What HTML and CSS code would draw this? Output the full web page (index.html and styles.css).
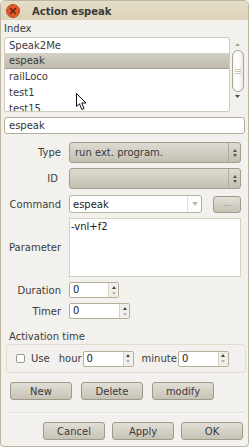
FILE: index.html
```html
<!DOCTYPE html>
<html>
<head>
<meta charset="utf-8">
<link rel="stylesheet" href="styles.css">
</head>
<body>
<div class="window">
  <div class="titlebar">
    <span class="close"><svg width="14" height="14" viewBox="0 0 14 14"><circle cx="7" cy="7" r="6.5" fill="#e3572a" stroke="#b94a22" stroke-width="1"/><path d="M4.6 4.6 L9.4 9.4 M9.4 4.6 L4.6 9.4" stroke="#6b2a12" stroke-width="1.6" stroke-linecap="round"/></svg></span>
    <span class="title">Action espeak</span>
  </div>
  <div class="content">
    <div class="index-label">Index</div>
    <div class="listwrap">
      <div class="list">
        <div class="item">Speak2Me</div>
        <div class="item sel">espeak</div>
        <div class="item">railLoco</div>
        <div class="item">test1</div>
        <div class="item">test15</div>
      </div>
      <div class="vscroll">
        <svg class="arr" width="7" height="5" viewBox="0 0 7 5"><path d="M3.5 1 L6 4 L1 4 Z" fill="#a8a496"/></svg>
        <div class="thumb"><span class="grip"></span><span class="grip"></span><span class="grip"></span></div>
        <svg class="arr" width="7" height="5" viewBox="0 0 7 5"><path d="M1 1 L6 1 L3.5 4 Z" fill="#4a4a4a"/></svg>
      </div>
      <svg class="cursor" width="12" height="18" viewBox="0 0 12 18"><path d="M0.5 0.5 L0.5 13.5 L3.5 10.8 L5.8 16.5 L8 15.5 L5.8 10 L10 10 Z" fill="#fff" stroke="#111" stroke-width="1" stroke-linejoin="round"/></svg>
    </div>
    <div class="entry">espeak</div>

    <div class="form">
      <div class="lbl">Type</div>
      <div class="combo"><span class="ctext">run ext. program.</span><span class="carrows"><i class="up"></i><i class="dn"></i></span></div>

      <div class="lbl lbl-id">ID</div>
      <div class="combo"><span class="ctext"></span><span class="carrows"><i class="up"></i><i class="dn"></i></span></div>

      <div class="lbl cmd-lbl">Command</div>
      <div class="cmdrow">
        <div class="cmdbox"><span class="ctext">espeak</span><span class="cdrop"><i class="dn light"></i></span></div>
        <div class="btn dots">...</div>
      </div>

      <div class="lbl">Parameter</div>
      <div class="textarea">-vnl+f2</div>

      <div class="lbl">Duration</div>
      <div class="spin w50"><span class="stext">0</span><span class="sarrows"><i class="up"></i><i class="dn light"></i></span></div>

      <div class="lbl">Timer</div>
      <div class="spin w61"><span class="stext">0</span><span class="sarrows"><i class="up"></i><i class="dn light"></i></span></div>
    </div>

    <div class="group-label">Activation time</div>
    <div class="frame">
      <span class="check"></span>
      <span class="use">Use</span>
      <span class="hour">hour</span>
      <div class="spin w51"><span class="stext">0</span><span class="sarrows"><i class="up"></i><i class="dn light"></i></span></div>
      <span class="minute">minute</span>
      <div class="spin w51"><span class="stext">0</span><span class="sarrows"><i class="up"></i><i class="dn light"></i></span></div>
    </div>

    <div class="btnrow">
      <div class="btn">New</div>
      <div class="btn">Delete</div>
      <div class="btn">modify</div>
    </div>
    <div class="sep"></div>
    <div class="btnrow2">
      <div class="btn">Cancel</div>
      <div class="btn">Apply</div>
      <div class="btn">OK</div>
    </div>
  </div>
</div>
</body>
</html>
```

FILE: styles.css
```css
* { box-sizing: border-box; }
html, body {
  margin: 0;
  padding: 0;
  background: #f2f1ed;
}
body {
  width: 249px;
  height: 447px;
  overflow: hidden;
  font-family: "DejaVu Sans", sans-serif;
  font-size: 10px;
  color: #3c3c3c;
}
.window {
  width: 249px;
  height: 447px;
  border: 1px solid #bdb6a0;
  border-radius: 5px 5px 4px 4px;
  background: #f2f1ed;
  overflow: hidden;
}
.titlebar {
  height: 19px;
  background: linear-gradient(#e4ddc8, #dcd3b7);
  display: flex;
  align-items: center;
  padding-left: 5px;
}
.close {
  width: 14px;
  height: 14px;
  display: flex;
}
.title {
  font-weight: bold;
  color: #3a3a3a;
  margin-left: 12px;
  margin-top: 1px;
}
.content {
  padding: 0 4px 0 3px;
}
.index-label {
  margin-top: 2px;
  line-height: 14px;
  height: 14px;
}
.listwrap {
  position: relative;
  margin-top: 1px;
  display: flex;
  height: 75px;
}
.list {
  width: 229px;
  height: 75px;
  border: 1px solid #cfcab9;
  border-radius: 2px;
  background: #fff;
  overflow: hidden;
}
.item {
  height: 16px;
  line-height: 15px;
  padding-left: 4px;
  color: #3a3a3a;
}
.item:first-child { height: 15px; }
.item.sel {
  background: linear-gradient(#d4d1c6, #bdb9ab);
  border-bottom: 1px solid #a9a597;
}
.vscroll {
  width: 13px;
  display: flex;
  flex-direction: column;
  align-items: center;
  padding-top: 5px;
  margin-left: 1px;
}
.vscroll .arr { display: block; }
.thumb {
  margin-top: 3px;
  width: 12px;
  height: 42px;
  border: 1px solid #aaa593;
  border-radius: 6px;
  background: linear-gradient(90deg, #f7f6f2, #fff 50%, #ebe8df);
  display: flex;
  flex-direction: column;
  align-items: center;
  justify-content: center;
  gap: 1px;
  margin-bottom: 2px;
}
.grip {
  display: block;
  width: 6px;
  height: 1px;
  background: #c8c3b4;
}
.cursor {
  position: absolute;
  left: 72px;
  top: 56px;
}
.entry {
  margin-top: 5px;
  height: 17px;
  border: 1px solid #b5ae98;
  border-radius: 3px;
  background: #fff;
  line-height: 15px;
  padding-left: 4px;
  color: #333;
  width: 241px;
}
.form {
  margin-top: 8px;
  display: grid;
  grid-template-columns: 57px 172px;
  column-gap: 8px;
  row-gap: 5px;
  align-items: center;
}
.lbl {
  text-align: right;
  color: #3c3c3c;
}
.lbl-id { padding-right: 3px; }
.cmd-lbl, .cmdrow { margin-top: 1px; }
.combo {
  height: 21px;
  border: 1px solid #a39e8c;
  border-radius: 3px;
  background: linear-gradient(#dedbd2, #c3bfb2);
  display: flex;
  align-items: center;
}
.ctext {
  flex: 1;
  padding-left: 5px;
  color: #3a3a3a;
}
.carrows {
  width: 12px;
  height: 100%;
  border-left: 1px solid #b0ab9b;
  display: flex;
  flex-direction: column;
  align-items: center;
  justify-content: center;
  gap: 2px;
}
i.up, i.dn {
  display: block;
  width: 0;
  height: 0;
  border-left: 2.5px solid transparent;
  border-right: 2.5px solid transparent;
}
i.up { border-bottom: 3px solid #555; }
i.dn { border-top: 3px solid #555; }
i.dn.light { border-top-color: #bbb8b0; }
.cmdrow {
  display: flex;
  align-items: center;
  height: 18px;
}
.cmdbox {
  width: 133px;
  height: 18px;
  border: 1px solid #b5ae98;
  border-radius: 3px;
  background: #fff;
  display: flex;
  align-items: center;
}
.cmdbox .ctext { padding-left: 3px; color: #222; }
.cdrop {
  width: 14px;
  height: 100%;
  border-left: 1px solid #e0ddd4;
  display: flex;
  align-items: center;
  justify-content: center;
}
.cdrop i.dn {
  border-left-width: 3px;
  border-right-width: 3px;
  border-top-width: 4px;
}
.btn {
  height: 18px;
  border: 1px solid #a09b89;
  border-radius: 3px;
  background: linear-gradient(#e2dfd7, #c6c2b5);
  display: flex;
  align-items: center;
  justify-content: center;
  color: #3a3a3a;
}
.btn.dots {
  width: 28px;
  height: 17px;
  margin-left: 11px;
  color: #777;
  font-size: 9px;
  padding-bottom: 3px;
}
.textarea {
  height: 59px;
  border: 1px solid #d5d0c0;
  background: #fff;
  padding: 1px 0 0 1px;
  line-height: 13px;
  color: #222;
}
.spin {
  height: 16px;
  border: 1px solid #b5ae98;
  border-radius: 2px;
  background: #fff;
  display: flex;
  align-items: stretch;
}
.w50 { width: 50px; }
.w61 { width: 61px; }
.w51 { width: 51px; }
.stext {
  flex: 1;
  padding-left: 3px;
  line-height: 14px;
  color: #222;
}
.sarrows {
  width: 10px;
  background: #f0efea;
  border-left: 1px solid #d7d3c6;
  display: flex;
  flex-direction: column;
  align-items: center;
  justify-content: center;
  gap: 3px;
}
.sarrows i.up { border-bottom-color: #444; }
.group-label {
  margin-top: 11px;
  line-height: 14px;
  height: 14px;
  padding-left: 5px;
}
.frame {
  margin: 0 0 0 2px;
  height: 29px;
  width: 240px;
  border: 1px solid #e1ddd2;
  border-radius: 4px;
  display: flex;
  align-items: center;
  padding-left: 9px;
}
.check {
  width: 9px;
  height: 9px;
  border: 1px solid #9c9889;
  border-radius: 2px;
  background: #fff;
}
.use { margin-left: 6px; }
.hour { margin-left: 9px; margin-right: 1px; }
.minute { margin-left: 8px; margin-right: 1px; }
.btnrow {
  margin-top: 9px;
  display: flex;
  gap: 9px;
  padding-left: 6px;
}
.btnrow .btn { width: 62px; }
.sep {
  margin-top: 12px;
  height: 2px;
  border-top: 1px solid #e0ddd4;
  border-bottom: 1px solid #fbfaf8;
  margin-left: 2px;
}
.btnrow2 {
  margin-top: 8px;
  display: flex;
  justify-content: flex-end;
  gap: 7px;
  padding-right: 1px;
}
.btnrow2 .btn { width: 62px; }
```
